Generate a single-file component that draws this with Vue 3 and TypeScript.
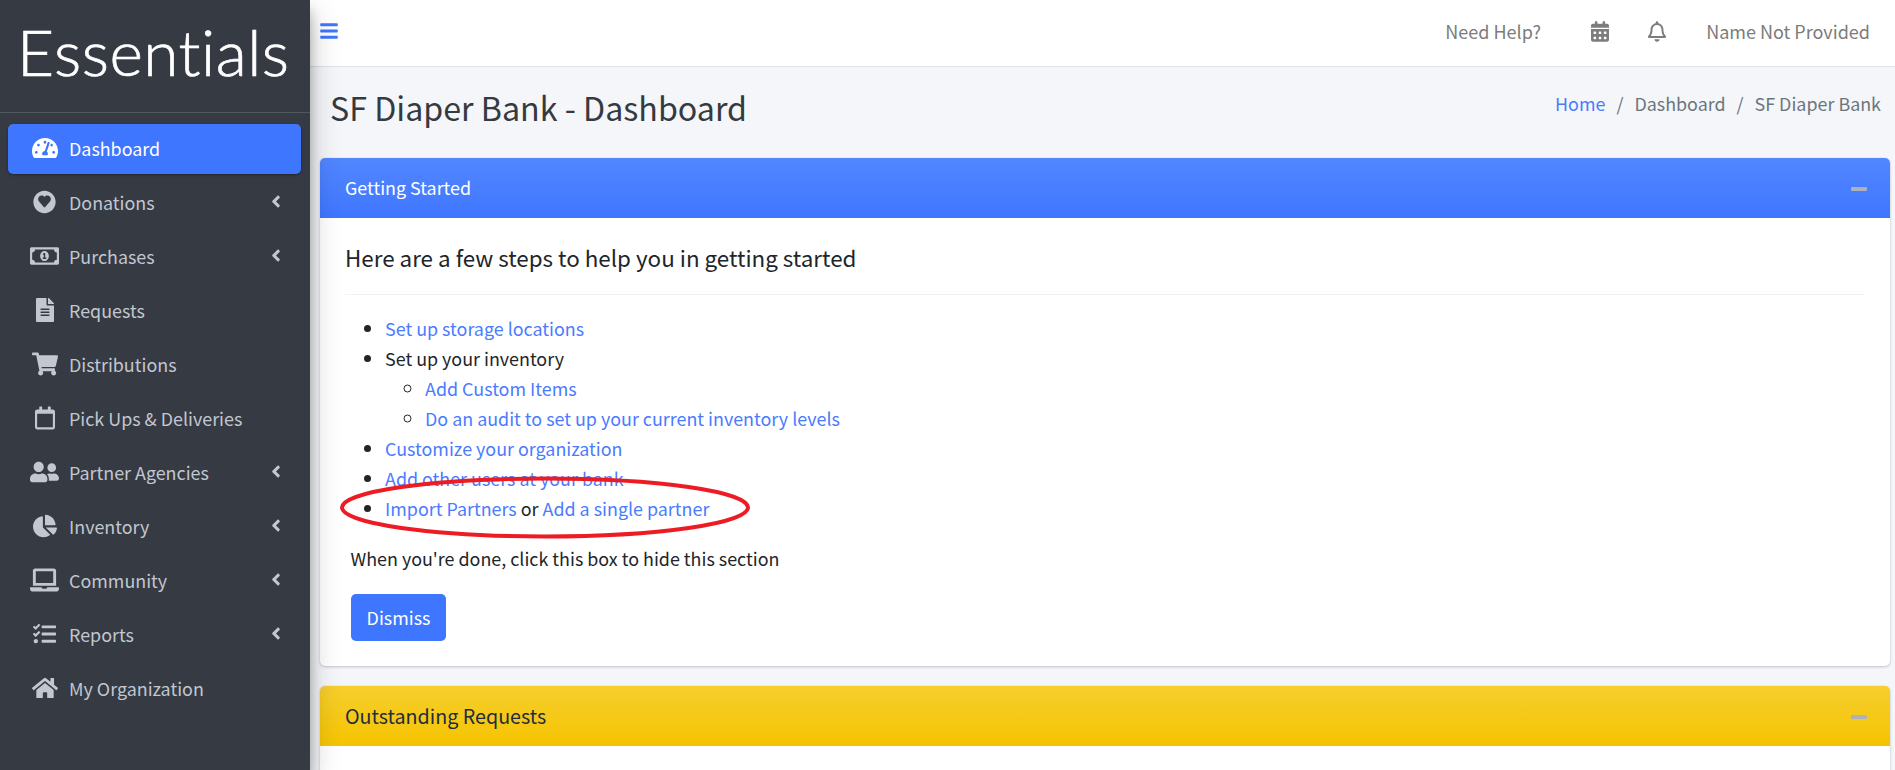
<script setup lang="ts">
interface NavItem {
  label: string
  viewBox: string
  path: string
  width: number
  active?: boolean
  caret?: boolean
}

const heartCircle =
  'M256 8C119 8 8 119 8 256s111 248 248 248 248-111 248-248S393 8 256 8zm0 136c30-38 84-44 118-12 32 30 32 80 4 112L272 370c-9 10-23 10-32 0L134 244c-28-32-28-82 4-112 34-32 88-26 118 12z'

const items: NavItem[] = [
  {
    label: 'Dashboard',
    active: true,
    viewBox: '0 0 576 512',
    width: 26,
    path: 'M288 32C128.94 32 0 160.94 0 320c0 52.8 14.25 102.26 39.06 144.8 5.61 9.62 16.3 15.2 27.44 15.2h443c11.14 0 21.83-5.58 27.44-15.2C561.75 422.26 576 372.8 576 320c0-159.06-128.94-288-288-288zm0 64c14.71 0 26.58 10.13 30.32 23.65-1.11 2.26-2.64 4.23-3.45 6.67l-9.22 27.67c-5.13 3.49-10.97 6.01-17.64 6.01-17.67 0-32-14.33-32-32S270.33 96 288 96zM96 384c-17.67 0-32-14.33-32-32s14.33-32 32-32 32 14.33 32 32-14.33 32-32 32zm48-160c-17.67 0-32-14.33-32-32s14.33-32 32-32 32 14.33 32 32-14.33 32-32 32zm246.77-72.41l-61.33 184C343.13 347.33 352 364.54 352 384c0 11.72-3.38 22.55-8.88 32H232.88c-5.5-9.45-8.88-20.28-8.88-32 0-33.94 26.5-61.43 59.9-63.59l61.34-184.01c4.17-12.56 17.73-19.45 30.36-15.17 12.57 4.19 19.35 17.79 15.17 30.36zm14.66 57.2l15.52-46.55c3.47-1.29 7.13-2.23 11.05-2.23 17.67 0 32 14.33 32 32s-14.33 32-32 32c-11.38-.01-20.89-6.28-26.57-15.22zM480 384c-17.67 0-32-14.33-32-32s14.33-32 32-32 32 14.33 32 32-14.33 32-32 32z',
  },
  { label: 'Donations', caret: true, viewBox: '0 0 512 512', width: 23, path: heartCircle },
  {
    label: 'Purchases',
    caret: true,
    viewBox: '0 0 640 512',
    width: 29,
    path: 'M320 144c-53.02 0-96 50.14-96 112 0 61.85 42.98 112 96 112 53 0 96-50.13 96-112 0-61.86-42.98-112-96-112zm40 168c0 4.42-3.58 8-8 8h-64c-4.42 0-8-3.58-8-8v-16c0-4.42 3.58-8 8-8h16v-55.44l-.47.31a7.992 7.992 0 0 1-11.09-2.22l-8.88-13.31a7.992 7.992 0 0 1 2.22-11.09l15.33-10.22a23.99 23.99 0 0 1 13.31-4.03H328c4.42 0 8 3.58 8 8v88h16c4.42 0 8 3.58 8 8v16zM608 64H32C14.33 64 0 78.33 0 96v320c0 17.67 14.33 32 32 32h576c17.67 0 32-14.33 32-32V96c0-17.67-14.33-32-32-32zm-16 272c-35.35 0-64 28.65-64 64H112c0-35.35-28.65-64-64-64V176c35.35 0 64-28.65 64-64h416c0 35.35 28.65 64 64 64v160z',
  },
  {
    label: 'Requests',
    viewBox: '0 0 384 512',
    width: 18,
    path: 'M224 136V0H24C10.7 0 0 10.7 0 24v464c0 13.3 10.7 24 24 24h336c13.3 0 24-10.7 24-24V160H248c-13.2 0-24-10.8-24-24zm64 236c0 6.6-5.4 12-12 12H108c-6.6 0-12-5.4-12-12v-8c0-6.6 5.4-12 12-12h168c6.6 0 12 5.4 12 12v8zm0-64c0 6.6-5.4 12-12 12H108c-6.6 0-12-5.4-12-12v-8c0-6.6 5.4-12 12-12h168c6.6 0 12 5.4 12 12v8zm0-72v8c0 6.6-5.4 12-12 12H108c-6.6 0-12-5.4-12-12v-8c0-6.6 5.4-12 12-12h168c6.6 0 12 5.4 12 12zm96-114.1v6.1H256V0h6.1c6.4 0 12.5 2.5 17 7l97.9 98c4.5 4.5 7 10.6 7 16.9z',
  },
  {
    label: 'Distributions',
    viewBox: '0 0 576 512',
    width: 26,
    path: 'M528.12 301.319l47.273-208C578.806 78.301 567.391 64 551.99 64H159.208l-9.166-44.81C147.758 8.021 137.93 0 126.529 0H24C10.745 0 0 10.745 0 24v16c0 13.255 10.745 24 24 24h69.883l70.248 343.435C147.325 417.1 136 435.222 136 456c0 30.928 25.072 56 56 56s56-25.072 56-56c0-15.674-6.447-29.835-16.824-40h209.647C430.447 426.165 424 440.326 424 456c0 30.928 25.072 56 56 56s56-25.072 56-56c0-22.172-12.888-41.332-31.579-50.405l5.517-24.276c3.413-15.018-8.002-29.319-23.403-29.319H218.117l-6.545-32h293.145c11.206 0 20.92-7.754 23.403-18.681z',
  },
  {
    label: 'Pick Ups & Deliveries',
    viewBox: '0 0 448 512',
    width: 20,
    path: 'M400 64h-48V12c0-6.6-5.4-12-12-12h-40c-6.6 0-12 5.4-12 12v52H160V12c0-6.6-5.4-12-12-12h-40c-6.6 0-12 5.4-12 12v52H48C21.5 64 0 85.5 0 112v352c0 26.5 21.5 48 48 48h352c26.5 0 48-21.5 48-48V112c0-26.5-21.5-48-48-48zm-6 400H54c-3.3 0-6-2.7-6-6V160h352v298c0 3.3-2.7 6-6 6z',
  },
  {
    label: 'Partner Agencies',
    caret: true,
    viewBox: '0 0 640 512',
    width: 29,
    path: 'M192 256c61.9 0 112-50.1 112-112S253.9 32 192 32 80 82.1 80 144s50.1 112 112 112zm76.8 32h-8.3c-20.8 10-43.9 16-68.5 16s-47.6-6-68.5-16h-8.3C51.6 288 0 339.6 0 403.2V432c0 26.5 21.5 48 48 48h288c26.5 0 48-21.5 48-48v-28.8c0-63.6-51.6-115.2-115.2-115.2zM480 256c53 0 96-43 96-96s-43-96-96-96-96 43-96 96 43 96 96 96zm48 32h-3.8c-13.9 4.8-28.6 8-44.2 8s-30.3-3.2-44.2-8H432c-20.4 0-39.2 5.9-55.7 15.4 24.4 26.3 39.7 61.2 39.7 99.8v38.4c0 2.2-.5 4.3-.6 6.4H592c26.5 0 48-21.5 48-48 0-61.9-50.1-112-112-112z',
  },
  {
    label: 'Inventory',
    caret: true,
    viewBox: '0 0 544 512',
    width: 24,
    path: 'M527.79 288H290.5l158.03 158.03c6.04 6.04 15.98 6.53 22.19.68 38.7-36.46 65.32-85.61 73.13-140.86 1.34-9.46-6.51-17.85-16.06-17.85zm-15.83-64.8C503.72 103.74 408.26 8.28 288.8.04 279.68-.59 272 7.1 272 16.24V240h223.77c9.14 0 16.82-7.68 16.19-16.8zM224 288V50.71c0-9.55-8.39-17.4-17.84-16.06C86.99 51.49-4.1 155.6.14 280.37 4.5 408.51 114.83 513.59 243.03 511.98c50.4-.63 96.97-16.87 135.26-44.03 7.9-5.6 8.42-17.23 1.57-24.08L224 288z',
  },
  {
    label: 'Community',
    caret: true,
    viewBox: '0 0 640 512',
    width: 29,
    path: 'M624 416H381.54c-.74 19.81-14.71 32-32.74 32H288c-18.69 0-33.02-17.47-32.77-32H16c-8.8 0-16 7.2-16 16v16c0 35.2 28.8 64 64 64h512c35.2 0 64-28.8 64-64v-16c0-8.8-7.2-16-16-16zM576 48c0-26.4-21.6-48-48-48H112C85.6 0 64 21.6 64 48v336h512V48zm-64 272H128V64h384v256z',
  },
  {
    label: 'Reports',
    caret: true,
    viewBox: '0 0 512 512',
    width: 23,
    path: 'M139.61 35.5a12 12 0 0 0-17 0L58.93 98.81l-22.7-22.12a12 12 0 0 0-17 0L3.53 92.41a12 12 0 0 0 0 17l47.59 47.4a12.78 12.78 0 0 0 17.61 0l15.59-15.62L156.52 69a12.09 12.09 0 0 0 .09-17zm0 159.19a12 12 0 0 0-17 0l-63.68 63.72-22.7-22.1a12 12 0 0 0-17 0L3.53 252a12 12 0 0 0 0 17L51 316.5a12.77 12.77 0 0 0 17.6 0l15.7-15.69 72.2-72.22a12 12 0 0 0 .09-16.9zM64 368c-26.49 0-48.59 21.5-48.59 48S37.53 464 64 464a48 48 0 0 0 0-96zm432 16H208a16 16 0 0 0-16 16v32a16 16 0 0 0 16 16h288a16 16 0 0 0 16-16v-32a16 16 0 0 0-16-16zm0-320H208a16 16 0 0 0-16 16v32a16 16 0 0 0 16 16h288a16 16 0 0 0 16-16V80a16 16 0 0 0-16-16zm0 160H208a16 16 0 0 0-16 16v32a16 16 0 0 0 16 16h288a16 16 0 0 0 16-16v-32a16 16 0 0 0-16-16z',
  },
  {
    label: 'My Organization',
    viewBox: '0 0 576 512',
    width: 26,
    path: 'M280.37 148.26L96 300.11V464a16 16 0 0 0 16 16l112.06-.29a16 16 0 0 0 15.92-16V368a16 16 0 0 1 16-16h64a16 16 0 0 1 16 16v95.64a16 16 0 0 0 16 16.05L464 480a16 16 0 0 0 16-16V300L295.67 148.26a12.19 12.19 0 0 0-15.3 0zM571.6 251.47L488 182.56V44.05a12 12 0 0 0-12-12h-56a12 12 0 0 0-12 12v72.61L318.47 43a48 48 0 0 0-61 0L4.34 251.47a12 12 0 0 0-1.6 16.9l25.5 31A12 12 0 0 0 45.15 301l235.22-193.74a12.19 12.19 0 0 1 15.3 0L530.9 301a12 12 0 0 0 16.9-1.6l25.5-31a12 12 0 0 0-1.7-16.93z',
  },
]

const angleLeft =
  'M31.7 239l136-136c9.4-9.4 24.6-9.4 33.9 0l22.6 22.6c9.4 9.4 9.4 24.6 0 33.9L127.9 256l96.4 96.4c9.4 9.4 9.4 24.6 0 33.9L201.7 409c-9.4 9.4-24.6 9.4-33.9 0l-136-136c-9.5-9.4-9.5-24.6-.1-34z'
</script>

<template>
  <div class="layout">
    <aside class="sidebar">
      <div class="brand">Essentials</div>
      <nav class="nav">
        <a v-for="item in items" :key="item.label" class="nav-item" :class="{ active: item.active }" href="#">
          <span class="nav-icon">
            <svg :viewBox="item.viewBox" :width="item.width" height="24" fill="currentColor" fill-rule="evenodd">
              <path :d="item.path" />
            </svg>
          </span>
          <span class="nav-label">{{ item.label }}</span>
          <svg v-if="item.caret" class="caret" viewBox="0 0 256 512" width="10" height="19" fill="currentColor">
            <path :d="angleLeft" />
          </svg>
        </a>
      </nav>
    </aside>

    <div class="main">
      <header class="topbar">
        <a class="burger" href="#" aria-label="Menu">
          <svg viewBox="0 0 448 512" width="18" height="20" fill="currentColor">
            <path d="M16 132h416c8.837 0 16-7.163 16-16V76c0-8.837-7.163-16-16-16H16C7.163 60 0 67.163 0 76v40c0 8.837 7.163 16 16 16zm0 160h416c8.837 0 16-7.163 16-16v-40c0-8.837-7.163-16-16-16H16c-8.837 0-16 7.163-16 16v40c0 8.837 7.163 16 16 16zm0 160h416c8.837 0 16-7.163 16-16v-40c0-8.837-7.163-16-16-16H16c-8.837 0-16 7.163-16 16v40c0 8.837 7.163 16 16 16z" />
          </svg>
        </a>
        <div class="top-right">
          <span class="help">Need Help?</span>
          <svg class="cal" viewBox="0 0 448 512" width="18" height="21" fill="currentColor">
            <path d="M0 464c0 26.5 21.5 48 48 48h352c26.5 0 48-21.5 48-48V192H0v272zm320-196c0-6.6 5.4-12 12-12h40c6.6 0 12 5.4 12 12v40c0 6.6-5.4 12-12 12h-40c-6.6 0-12-5.4-12-12v-40zm0 128c0-6.6 5.4-12 12-12h40c6.6 0 12 5.4 12 12v40c0 6.6-5.4 12-12 12h-40c-6.6 0-12-5.4-12-12v-40zM192 268c0-6.6 5.4-12 12-12h40c6.6 0 12 5.4 12 12v40c0 6.6-5.4 12-12 12h-40c-6.6 0-12-5.4-12-12v-40zm0 128c0-6.6 5.4-12 12-12h40c6.6 0 12 5.4 12 12v40c0 6.6-5.4 12-12 12h-40c-6.6 0-12-5.4-12-12v-40zM64 268c0-6.6 5.4-12 12-12h40c6.6 0 12 5.4 12 12v40c0 6.6-5.4 12-12 12H76c-6.6 0-12-5.4-12-12v-40zm0 128c0-6.6 5.4-12 12-12h40c6.6 0 12 5.4 12 12v40c0 6.6-5.4 12-12 12H76c-6.6 0-12-5.4-12-12v-40zM400 64h-48V16c0-8.8-7.2-16-16-16h-32c-8.8 0-16 7.2-16 16v48H160V16c0-8.8-7.2-16-16-16h-32c-8.8 0-16 7.2-16 16v48H48C21.5 64 0 85.5 0 112v48h448v-48c0-26.5-21.5-48-48-48z" />
          </svg>
          <svg class="bell" viewBox="0 0 448 512" width="18" height="21" fill="currentColor">
            <path d="M439.39 362.29c-19.32-20.76-55.47-51.99-55.47-154.29 0-77.7-54.48-139.9-127.94-155.16V32c0-17.67-14.32-32-31.98-32s-31.98 14.33-31.98 32v20.84C118.56 68.1 64.08 130.3 64.08 208c0 102.3-36.15 133.53-55.47 154.29-6 6.45-8.66 14.16-8.61 21.71.11 16.4 12.98 32 32.1 32h383.8c19.12 0 32-15.6 32.1-32 .05-7.55-2.61-15.27-8.61-21.71zM67.53 368c21.22-27.97 44.42-74.33 44.53-159.42 0-.2-.06-.38-.06-.58 0-61.86 50.14-112 112-112s112 50.14 112 112c0 .2-.06.38-.06.58.11 85.1 23.31 131.46 44.53 159.42H67.53zM224 512c35.32 0 63.97-28.65 63.97-64H160.03c0 35.35 28.65 64 63.97 64z" />
          </svg>
          <span class="user">Name Not Provided</span>
        </div>
      </header>

      <main class="content">
        <div class="page-head">
          <h1 class="title">SF Diaper Bank - Dashboard</h1>
          <ol class="crumbs">
            <li><a href="#">Home</a></li>
            <li class="sep">/</li>
            <li>Dashboard</li>
            <li class="sep">/</li>
            <li>SF Diaper Bank</li>
          </ol>
        </div>

        <section class="card">
          <div class="card-head blue">
            <span>Getting Started</span>
            <span class="minus"></span>
          </div>
          <div class="card-body">
            <h4 class="steps">Here are a few steps to help you in getting started</h4>
            <ul class="list">
              <li><a href="#">Set up storage locations</a></li>
              <li>
                Set up your inventory
                <ul class="sub">
                  <li><a href="#">Add Custom Items</a></li>
                  <li><a href="#">Do an audit to set up your current inventory levels</a></li>
                </ul>
              </li>
              <li><a href="#">Customize your organization</a></li>
              <li><a href="#">Add other users at your bank</a></li>
              <li class="marked">
                <a href="#">Import Partners</a> or <a href="#">Add a single partner</a>
                <svg class="ring" viewBox="0 0 412 64" width="412" height="64" fill="none">
                  <ellipse cx="205" cy="32.5" rx="203" ry="29" stroke="#ed1c24" stroke-width="4" />
                </svg>
              </li>
            </ul>
            <p class="done">When you're done, click this box to hide this section</p>
            <button class="dismiss" type="button">Dismiss</button>
          </div>
        </section>

        <section class="card">
          <div class="card-head yellow">
            <span>Outstanding Requests</span>
            <span class="minus"></span>
          </div>
          <div class="card-body tail"></div>
        </section>
      </main>
    </div>
  </div>
</template>

<style scoped>
.layout {
  display: flex;
  height: 770px;
  overflow: hidden;
  font-family: "Noto Sans CJK SC", "Noto Sans", sans-serif;
  font-size: 17.9px;
  color: #212529;
}
.sidebar {
  width: 310px;
  flex: none;
  background: #353a43;
  box-shadow: 0 14px 28px rgba(0, 0, 0, 0.25), 0 10px 10px rgba(0, 0, 0, 0.22);
  position: relative;
  z-index: 2;
}
.brand {
  height: 113px;
  box-sizing: border-box;
  border-bottom: 1px solid #4f5962;
  color: #fff;
  font-family: Lato, sans-serif;
  font-weight: 300;
  font-size: 64px;
  letter-spacing: 0.5px;
  -webkit-text-stroke: 0.7px #fff;
  line-height: 104px;
  padding-left: 17px;
  white-space: nowrap;
}
.nav {
  display: flex;
  flex-direction: column;
  gap: 4px;
  padding: 11px 9px 0 8px;
}
.nav-item {
  display: flex;
  align-items: center;
  box-sizing: border-box;
  height: 50px;
  padding: 0 20px 2px;
  border-radius: 5px;
  color: #c2c7d0;
  text-decoration: none;
}
.nav-item.active {
  background: #3f76ff;
  color: #fff;
  box-shadow: 0 1px 3px rgba(0, 0, 0, 0.12), 0 1px 2px rgba(0, 0, 0, 0.24);
}
.nav-icon {
  width: 41px;
  flex: none;
  display: flex;
  justify-content: center;
  margin-left: -4px;
}
.nav-label {
  flex: 1;
  padding-left: 4px;
  white-space: nowrap;
}
.caret {
  flex: none;
  margin-top: -2px;
}
.main {
  flex: 1;
  min-width: 0;
  display: flex;
  flex-direction: column;
}
.topbar {
  height: 67px;
  flex: none;
  box-sizing: border-box;
  background: #fff;
  border-bottom: 1px solid #dee2e6;
  display: flex;
  align-items: center;
  justify-content: space-between;
  padding: 0 25px 4px 10px;
  color: #7c7c7c;
}
.burger {
  color: #3f76ff;
  display: flex;
}
.top-right {
  display: flex;
  align-items: center;
  font-size: 18px;
}
.help {
  margin-right: 50px;
}
.cal {
  margin-right: 39px;
}
.bell {
  margin-right: 40px;
}
.content {
  flex: 1;
  background: #f4f6f9;
  padding: 0 5px 0 10px;
}
.page-head {
  height: 91px;
  display: flex;
  align-items: center;
  justify-content: space-between;
  padding: 0 9px 10px 10px;
  box-sizing: border-box;
}
.title {
  margin: 0;
  font-size: 32.2px;
  font-weight: 400;
  line-height: 1.2;
  color: #343a40;
}
.crumbs {
  display: flex;
  gap: 11px;
  list-style: none;
  margin: 0;
  padding: 0 0 9px;
  color: #6c757d;
}
a {
  color: #4a7bff;
  text-decoration: none;
}
.card {
  background: #fff;
  border-radius: 5px;
  box-shadow: 0 0 1px rgba(0, 0, 0, 0.125), 0 1px 3px rgba(0, 0, 0, 0.2);
  margin-bottom: 20px;
}
.card-head {
  height: 60px;
  box-sizing: border-box;
  display: flex;
  align-items: center;
  justify-content: space-between;
  padding: 0 23px 2px 25px;
  border-radius: 5px 5px 0 0;
}
.blue {
  background: linear-gradient(180deg, #5287ff, #3f76ff);
  color: #fff;
}
.yellow {
  background: linear-gradient(180deg, #f6ce2e, #f5c400);
  color: #1f2d3d;
  font-size: 19.7px;
}
.minus {
  width: 16px;
  height: 4px;
  border-radius: 1px;
  background: #adb1bd;
  margin-top: 4px;
}
.card-body {
  padding: 23px 25px 25px;
}
.tail {
  height: 40px;
}
.steps {
  margin: 0;
  font-size: 22.4px;
  font-weight: 400;
  line-height: 32px;
  padding-bottom: 21px;
  border-bottom: 1px solid #f2f2f2;
}
.list {
  margin: 18px 0 0;
  padding: 0 0 0 40px;
  line-height: 30px;
  list-style: disc;
}
.sub {
  margin: 0;
  padding: 0 0 0 40px;
  list-style: circle;
}
.marked {
  position: relative;
}
.ring {
  position: absolute;
  left: -45px;
  top: -18px;
  pointer-events: none;
}
.done {
  margin: 20px 0 0 5.5px;
  line-height: 30px;
}
.dismiss {
  display: block;
  margin: 21px 0 0 6px;
  width: 95px;
  height: 47px;
  padding: 0 0 2px;
  border: 0;
  border-radius: 5px;
  background: #3f76ff;
  color: #fff;
  font: inherit;
}
</style>

<style>
body {
  overflow: hidden;
  background: #f4f6f9;
}
</style>
